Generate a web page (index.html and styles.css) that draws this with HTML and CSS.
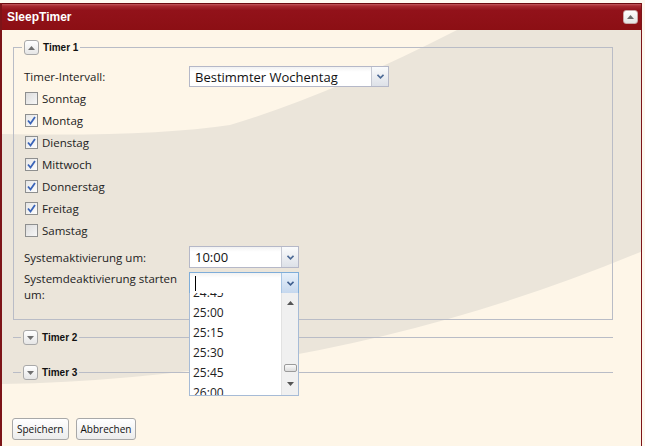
FILE: index.html
```html
<!DOCTYPE html>
<html lang="de">

<head>
    <meta charset="UTF-8">
    <title>SleepTimer</title>
    <link rel="stylesheet" href="styles.css">
</head>

<body>
    <div class="panel">
        <div class="panel-header">
            <span class="panel-title">SleepTimer</span>
            <span class="tool-btn">
                <svg width="7" height="4" viewBox="0 0 7 4"><path d="M0 4 L3.5 0 L7 4 Z" fill="#6b6b6b"/></svg>
            </span>
        </div>

        <div class="panel-body">
            <!-- background swoosh -->
            <svg class="swoosh" width="640" height="416" viewBox="2 30 640 416" preserveAspectRatio="none">
                <path d="M457 30 Q 330 95 230 125 Q 150 137 0 134 L 0 384 Q 340 378 645 250 L 645 30 Z" fill="#ebe5da"/>
            </svg>

            <div class="panel-content">
                <fieldset class="timer">
                    <legend>
                        <span class="toggle">
                            <svg width="7" height="4" viewBox="0 0 7 4"><path d="M0 4 L3.5 0 L7 4 Z" fill="#707070"/></svg>
                        </span>
                        Timer 1
                    </legend>

                    <div class="form-row first">
                        <span class="field-label">Timer-Intervall:</span>
                        <div class="combo wide">
                            <span class="combo-text">Bestimmter Wochentag</span>
                            <span class="combo-trigger">
                                <svg width="7" height="5" viewBox="0 0 7 5"><path d="M0.5 0.8 L3.5 3.8 L6.5 0.8" fill="none" stroke="#4c6a96" stroke-width="1.6"/></svg>
                            </span>
                        </div>
                    </div>

                    <label class="check-row"><span class="check"></span>Sonntag</label>
                    <label class="check-row"><span class="check checked"><svg width="9" height="9" viewBox="0 0 9 9"><path d="M1 4.5 L3.5 7.5 L8 1" fill="none" stroke="#3a64b8" stroke-width="1.8"/></svg></span>Montag</label>
                    <label class="check-row"><span class="check checked"><svg width="9" height="9" viewBox="0 0 9 9"><path d="M1 4.5 L3.5 7.5 L8 1" fill="none" stroke="#3a64b8" stroke-width="1.8"/></svg></span>Dienstag</label>
                    <label class="check-row"><span class="check checked"><svg width="9" height="9" viewBox="0 0 9 9"><path d="M1 4.5 L3.5 7.5 L8 1" fill="none" stroke="#3a64b8" stroke-width="1.8"/></svg></span>Mittwoch</label>
                    <label class="check-row"><span class="check checked"><svg width="9" height="9" viewBox="0 0 9 9"><path d="M1 4.5 L3.5 7.5 L8 1" fill="none" stroke="#3a64b8" stroke-width="1.8"/></svg></span>Donnerstag</label>
                    <label class="check-row"><span class="check checked"><svg width="9" height="9" viewBox="0 0 9 9"><path d="M1 4.5 L3.5 7.5 L8 1" fill="none" stroke="#3a64b8" stroke-width="1.8"/></svg></span>Freitag</label>
                    <label class="check-row"><span class="check"></span>Samstag</label>

                    <div class="form-row time-row">
                        <span class="field-label">Systemaktivierung um:</span>
                        <div class="combo time">
                            <span class="combo-text">10:00</span>
                            <span class="combo-trigger">
                                <svg width="7" height="5" viewBox="0 0 7 5"><path d="M0.5 0.8 L3.5 3.8 L6.5 0.8" fill="none" stroke="#4c6a96" stroke-width="1.6"/></svg>
                            </span>
                        </div>
                    </div>

                    <div class="form-row time-row last">
                        <span class="field-label two-line">Systemdeaktivierung starten um:</span>
                        <div class="combo time focused">
                            <span class="combo-text"><span class="caret"></span></span>
                            <span class="combo-trigger">
                                <svg width="7" height="5" viewBox="0 0 7 5"><path d="M0.5 0.8 L3.5 3.8 L6.5 0.8" fill="none" stroke="#3f5f8f" stroke-width="1.6"/></svg>
                            </span>

                            <div class="combo-list">
                                <div class="list-items">
                                    <div class="list-item">24:45</div>
                                    <div class="list-item">25:00</div>
                                    <div class="list-item">25:15</div>
                                    <div class="list-item">25:30</div>
                                    <div class="list-item">25:45</div>
                                    <div class="list-item">26:00</div>
                                </div>
                                <div class="scrollbar">
                                    <svg class="arrow-up" width="7" height="4" viewBox="0 0 7 4"><path d="M0 4 L3.5 0 L7 4 Z" fill="#555"/></svg>
                                    <span class="thumb"></span>
                                    <svg class="arrow-down" width="7" height="4" viewBox="0 0 7 4"><path d="M0 0 L3.5 4 L7 0 Z" fill="#555"/></svg>
                                </div>
                            </div>
                        </div>
                    </div>
                </fieldset>

                <fieldset class="timer collapsed">
                    <legend>
                        <span class="toggle">
                            <svg width="7" height="4" viewBox="0 0 7 4"><path d="M0 0 L3.5 4 L7 0 Z" fill="#707070"/></svg>
                        </span>
                        Timer 2
                    </legend>
                </fieldset>

                <fieldset class="timer collapsed third">
                    <legend>
                        <span class="toggle">
                            <svg width="7" height="4" viewBox="0 0 7 4"><path d="M0 0 L3.5 4 L7 0 Z" fill="#707070"/></svg>
                        </span>
                        Timer 3
                    </legend>
                </fieldset>

                <div class="actions">
                    <button class="btn">Speichern</button>
                    <button class="btn">Abbrechen</button>
                </div>
            </div>
        </div>
    </div>
</body>

</html>
```

FILE: styles.css
```css
* {
    margin: 0;
    padding: 0;
    box-sizing: border-box;
}

body {
    background: #fdf8ef;
    font-family: 'Open Sans', 'Liberation Sans', sans-serif;
    font-size: 11.5px;
    color: #222;
    overflow: hidden;
}

/* Outer window */
.panel {
    margin-top: 3px;
    width: 642px;
    height: 443px;
    display: flex;
    flex-direction: column;
    border-left: 2px solid #7d1418;
    border-right: 1px solid #7d1418;
}

.panel-header {
    height: 27px;
    display: flex;
    align-items: center;
    justify-content: space-between;
    padding: 0 3px 0 5px;
    border-top: 1px solid #6c0a0e;
    background: linear-gradient(to bottom, #c2585c 0, #a6282d 2px, #92121a 6px, #8c0f14 100%);
}

.panel-title {
    color: #fff;
    font-family: 'Liberation Sans', Arial, sans-serif;
    font-weight: bold;
    font-size: 12px;
}

.tool-btn {
    width: 15px;
    height: 14px;
    border-radius: 3px;
    background: linear-gradient(to bottom, #ffffff, #e4e4e4);
    border: 1px solid #c9a7a7;
    display: flex;
    align-items: center;
    justify-content: center;
}

.panel-body {
    position: relative;
    flex: 1;
    background: #fef6e8;
    overflow: hidden;
}

.swoosh {
    position: absolute;
    top: 0;
    left: 0;
}

.panel-content {
    position: relative;
    height: 100%;
    display: flex;
    flex-direction: column;
    padding: 10px 28px 6px 11px;
}

/* Fieldsets */
.timer {
    border: 1px solid #b9bcc6;
    padding: 0 10px 16px 10px;
}

.timer legend {
    display: flex;
    align-items: center;
    gap: 4px;
    margin-left: -2px;
    padding: 0 2px;
    height: 15px;
    font-family: 'Liberation Sans', Arial, sans-serif;
    font-weight: bold;
    font-size: 10px;
    color: #111;
}

.toggle {
    width: 15px;
    height: 15px;
    border-radius: 3px;
    border: 1px solid #a9a9a9;
    background: linear-gradient(to bottom, #ffffff, #e6e6e6);
    display: flex;
    align-items: center;
    justify-content: center;
}

.timer.collapsed {
    border-width: 1px 0 0 0;
    padding-bottom: 0;
    margin-top: 10px;
}

.timer.collapsed.third {
    margin-top: 20px;
}

/* Form rows */
.form-row {
    display: flex;
    align-items: center;
}

.form-row.first {
    margin-top: 11px;
}

.field-label {
    width: 165px;
    flex-shrink: 0;
    color: #222;
}

.field-label.two-line {
    line-height: 16px;
    padding-right: 10px;
    margin-top: -1px;
}

.time-row {
    margin-top: 5px;
}

.time-row.last {
    margin-top: 4px;
    align-items: flex-start;
}

.check-row {
    display: flex;
    align-items: center;
    height: 22px;
    gap: 4px;
    padding-left: 1px;
}

.check {
    width: 13px;
    height: 13px;
    border: 1px solid #8e8f8f;
    background: linear-gradient(135deg, #dcdcdc, #f7f7f7);
    display: flex;
    align-items: center;
    justify-content: center;
}

.check.checked {
    background: linear-gradient(135deg, #e6e6e6, #fdfdfd);
}

/* Combo boxes */
.combo {
    position: relative;
    display: flex;
    height: 21px;
    border: 1px solid #b5b8c8;
    background: #fff;
}

.combo.wide {
    width: 200px;
}

.combo.time {
    width: 110px;
    height: 22px;
}

.combo-text {
    flex: 1;
    display: flex;
    align-items: center;
    padding-left: 5px;
    font-size: 13px;
    color: #111;
    background: linear-gradient(to bottom, #f2f2f2, #ffffff 5px);
}

.combo-trigger {
    width: 17px;
    border-left: 1px solid #c5c8d2;
    background: linear-gradient(to bottom, #fafbfc, #dde1e8);
    display: flex;
    align-items: center;
    justify-content: center;
}

.combo.focused {
    border-color: #7eadd9;
}

.combo.focused .combo-trigger {
    border-left-color: #a9c5e3;
    background: linear-gradient(to bottom, #e7f0fa, #c6d8ee);
}

.caret {
    width: 1px;
    height: 15px;
    background: #000;
}

/* Dropdown list */
.combo-list {
    position: absolute;
    top: 100%;
    left: -1px;
    width: 110px;
    height: 103px;
    display: flex;
    border: 1px solid #a6bbd6;
    border-top: none;
    background: #fff;
    overflow: hidden;
    z-index: 2;
}

.list-items {
    flex: 1;
    margin-top: -11px;
}

.list-item {
    height: 20px;
    display: flex;
    align-items: center;
    padding-left: 3px;
    font-size: 12px;
    color: #222;
}

.scrollbar {
    position: relative;
    width: 17px;
    background: #f0f0f0;
    border-left: 1px solid #e2e2e2;
}

.arrow-up {
    position: absolute;
    top: 8px;
    left: 5px;
}

.arrow-down {
    position: absolute;
    top: 89px;
    left: 5px;
}

.thumb {
    position: absolute;
    top: 71px;
    left: 2px;
    width: 13px;
    height: 8px;
    border: 1px solid #9a9a9a;
    border-radius: 2px;
    background: linear-gradient(to bottom, #fafafa, #dcdcdc);
}

/* Buttons */
.actions {
    margin-top: auto;
    display: flex;
    gap: 7px;
    margin-left: -1px;
}

.btn {
    height: 22px;
    padding: 0 4px;
    border: 1px solid #a8a8a8;
    border-radius: 3px;
    background: linear-gradient(to bottom, #ffffff, #ececec);
    font-family: 'Open Sans', 'Liberation Sans', sans-serif;
    font-size: 10px;
    color: #111;
}
```
